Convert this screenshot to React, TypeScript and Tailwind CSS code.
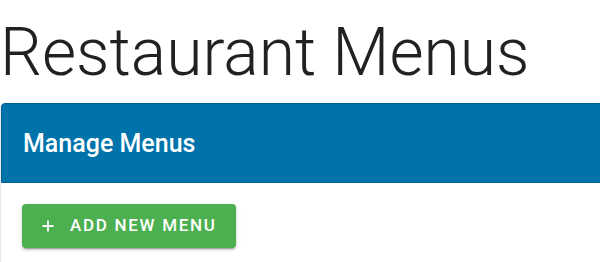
export default function App() {
  return (
    <div className="min-h-screen bg-white pt-[17px] font-['Roboto',sans-serif] text-[rgba(0,0,0,0.87)]">
      {/* Page title */}
      <h1 className="mb-[14px] text-[66px] font-light leading-[72px]">Restaurant Menus</h1>

      {/* Card */}
      <div className="ml-[1px] w-[640px] rounded-t-[4px] bg-white pb-[40px] shadow-[0_1px_3px_rgba(0,0,0,0.2),0_1px_1px_rgba(0,0,0,0.14)]">
        <div className="flex h-[80px] items-center rounded-t-[4px] border border-[#006296] bg-[#0073aa] px-[21px]">
          <h2 className="text-[25px] font-medium leading-none text-white">Manage Menus</h2>
        </div>

        <div className="px-[21px] pt-[21px]">
          <button className="flex h-[44px] w-[214px] items-center rounded-[4px] bg-[#4caf50] pl-[20px] text-[17px] font-medium uppercase tracking-[0.1em] text-white shadow-[0_3px_1px_-2px_rgba(0,0,0,0.2),0_2px_2px_0_rgba(0,0,0,0.14),0_1px_5px_0_rgba(0,0,0,0.12)]">
            <svg width="12" height="12" viewBox="0 0 12 12" className="mr-[16px] shrink-0">
              <path d="M6 0.5v11M0.5 6h11" stroke="white" strokeWidth="1.8" fill="none" />
            </svg>
            Add New Menu
          </button>
        </div>
      </div>
    </div>
  )
}
